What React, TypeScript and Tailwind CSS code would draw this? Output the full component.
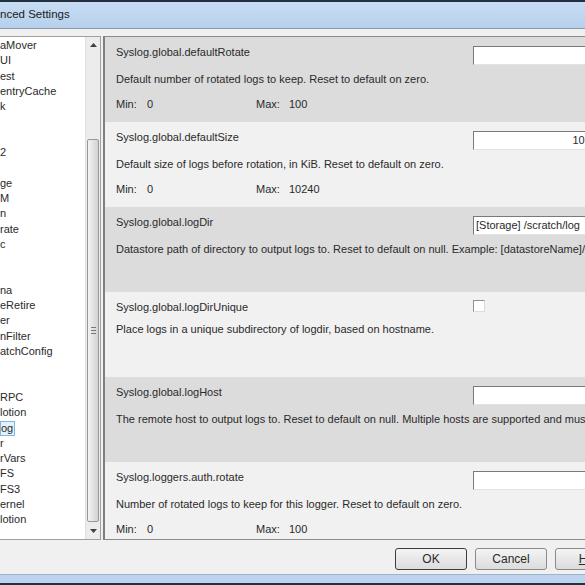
import React from "react"

type Setting = {
  name: string
  desc: string
  min?: string
  max?: string
  value?: string
  right?: boolean
  checkbox?: boolean
}

const settings: Setting[] = [
  {
    name: "Syslog.global.defaultRotate",
    desc: "Default number of rotated logs to keep. Reset to default on zero.",
    min: "0",
    max: "100",
    value: "",
  },
  {
    name: "Syslog.global.defaultSize",
    desc: "Default size of logs before rotation, in KiB. Reset to default on zero.",
    min: "0",
    max: "10240",
    value: "10240",
    right: true,
  },
  {
    name: "Syslog.global.logDir",
    desc: "Datastore path of directory to output logs to. Reset to default on null. Example: [datastoreName]/logs",
    value: "[Storage] /scratch/log",
  },
  {
    name: "Syslog.global.logDirUnique",
    desc: "Place logs in a unique subdirectory of logdir, based on hostname.",
    checkbox: true,
  },
  {
    name: "Syslog.global.logHost",
    desc: "The remote host to output logs to. Reset to default on null. Multiple hosts are supported and must be separated with comma (,).",
    value: "",
  },
  {
    name: "Syslog.loggers.auth.rotate",
    desc: "Number of rotated logs to keep for this logger. Reset to default on zero.",
    min: "0",
    max: "100",
    value: "",
  },
]

// list is scrolled / cropped at the left edge, only the tails show
const treeItems = [
  "aMover", "UI", "est", "entryCache", "k", "", "", "2", "", "ge", "M", "n", "rate", "c", "", "",
  "na", "eRetire", "er", "nFilter", "atchConfig", "", "", "RPC", "lotion", "og", "r", "rVars",
  "FS", "FS3", "ernel", "lotion",
]

function Field({ s }: { s: Setting }) {
  if (s.checkbox) {
    return (
      <div className="mt-[8px] w-[12px] h-[12px] shrink-0 bg-white border border-[#8e8f8f] border-r-[#dcdcdc] border-b-[#dcdcdc]" />
    )
  }
  return (
    <div
      className={
        "mt-[9px] w-[133px] h-[19px] shrink-0 bg-white border border-[#7a7a7a] border-r-[#e3e3e3] border-b-[#e3e3e3] flex items-center px-[2px] whitespace-nowrap " +
        (s.right ? "justify-end" : "justify-start")
      }
    >
      {s.value}
    </div>
  )
}

function SettingRow({ s, index }: { s: Setting; index: number }) {
  return (
    <div className={"h-[85px] shrink-0 overflow-hidden " + (index % 2 === 0 ? "bg-[#dcdcdc]" : "bg-[#f1f1f1]")}>
      <div className="flex">
        <div className="w-[368px] shrink-0 pl-[11px] pt-[8px]">{s.name}</div>
        <Field s={s} />
      </div>
      <div className="pl-[11px] mt-[7px] whitespace-nowrap">{s.desc}</div>
      {s.min !== undefined && (
        <div className="pl-[11px] mt-[10px] flex whitespace-nowrap">
          <div className="w-[140px] flex">
            <span className="w-[31px]">Min:</span>
            <span>{s.min}</span>
          </div>
          <span className="w-[33px]">Max:</span>
          <span>{s.max}</span>
        </div>
      )}
    </div>
  )
}

function Arrow({ up }: { up?: boolean }) {
  return (
    <div className="h-[16px] flex items-center justify-center">
      <svg width="7" height="4" viewBox="0 0 7 4">
        {up ? <path d="M0 4 L3.5 0 L7 4 Z" fill="#404040" /> : <path d="M0 0 L3.5 4 L7 0 Z" fill="#404040" />}
      </svg>
    </div>
  )
}

export default function App() {
  return (
    <div
      className="w-[585px] h-[585px] overflow-hidden flex flex-col bg-[#f0f0f0] text-[11px] leading-[15px] text-[#2a2a2a]"
      style={{ fontFamily: "Tahoma, 'Liberation Sans', Arial, sans-serif" }}
    >
      {/* Title bar */}
      <div className="h-[29px] shrink-0 border-t-2 border-[#22303f] border-b border-b-[#8d9aa8] bg-gradient-to-b from-[#c7ddf4] to-[#b6d0ec] flex items-center">
        <span className="text-[11.5px] text-[#1b1b1b] -mt-[2px]">nced Settings</span>
      </div>

      {/* Body */}
      <div className="flex-1 flex flex-col pt-[7px] min-h-0">
        <div className="flex h-[504px] shrink-0">
          {/* Tree list */}
          <div className="w-[101px] shrink-0 flex border-t border-b border-r border-[#a0a0a0] bg-white">
            <div className="flex-1 pt-[1px]">
              {treeItems.map((t, i) => (
                <div key={i} className="h-[15.3px] leading-[15px] whitespace-nowrap flex items-center">
                  {t === "og" ? (
                    <span className="bg-[#e3f1fb] border border-[#86b4dd] pr-[1px] leading-[13px]">og</span>
                  ) : (
                    t
                  )}
                </div>
              ))}
            </div>
            {/* Scrollbar */}
            <div className="w-[15px] flex flex-col bg-[#ececec] border-l border-[#e0e0e0]">
              <Arrow up />
              <div className="flex-1 pt-[86px] pb-[1px] px-[1px] flex flex-col">
                <div className="flex-1 rounded-[2px] border border-[#979797] bg-gradient-to-r from-[#f3f3f3] to-[#d2d2d2] flex items-center justify-center">
                  <div className="flex flex-col gap-[2px]">
                    <div className="w-[5px] h-px bg-[#777]" />
                    <div className="w-[5px] h-px bg-[#777]" />
                    <div className="w-[5px] h-px bg-[#777]" />
                  </div>
                </div>
              </div>
              <Arrow />
            </div>
          </div>

          {/* Settings pane */}
          <div className="ml-[2px] flex-1 min-w-0 border-t border-b border-l-2 border-[#8a8a8a] border-l-[#7f7f7f] flex flex-col overflow-hidden">
            {settings.map((s, i) => (
              <SettingRow key={s.name} s={s} index={i} />
            ))}
          </div>
        </div>

        {/* Buttons */}
        <div className="flex-1 flex items-start gap-[8px] pl-[395px] pt-[8px] text-[12px]">
          <button className="w-[72px] h-[22px] shrink-0 rounded-[3px] border border-[#3d3d3d] bg-gradient-to-b from-[#f4f4f4] to-[#dcdcdc]">
            OK
          </button>
          <button className="w-[72px] h-[22px] shrink-0 rounded-[3px] border border-[#8a8a8a] bg-gradient-to-b from-[#f4f4f4] to-[#dcdcdc]">
            Cancel
          </button>
          <button className="w-[72px] h-[22px] shrink-0 rounded-[3px] border border-[#8a8a8a] bg-gradient-to-b from-[#f4f4f4] to-[#dcdcdc]">
            <span className="underline">H</span>elp
          </button>
        </div>
      </div>

      {/* Bottom frame */}
      <div className="h-[11px] shrink-0 border-t border-[#9fb3c8] bg-[#bcd4ee] border-b-2 border-b-[#22303f]" />
    </div>
  )
}
